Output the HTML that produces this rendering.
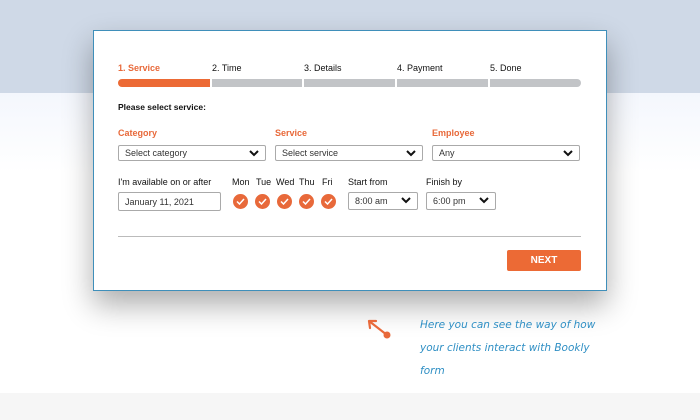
<!DOCTYPE html>
<html><head><meta charset="utf-8"><style>
*{margin:0;padding:0;box-sizing:border-box}
body{width:700px;height:420px;overflow:hidden;position:relative;background:#fff;font-family:"Liberation Sans",sans-serif;font-size:9px;color:#111}
.top{position:absolute;left:0;top:0;width:700px;height:93px;background:#cfd9e7}
.mid{position:absolute;left:0;top:93px;width:700px;height:80px;background:linear-gradient(#f4f7fd,#fff)}
.bot{position:absolute;left:0;top:393px;width:700px;height:27px;background:#f6f6f6}
.card{position:absolute;left:93px;top:30px;width:514px;height:261px;background:#fff;border:1px solid #3f8fba;box-shadow:0 14px 28px rgba(0,0,0,.32)}
.a{position:absolute;white-space:nowrap}
.or{color:#e8693a;font-weight:bold}
.bar{position:absolute;top:79px;height:8px;background:#c2c4c7}
.sel{position:absolute;height:16px;border:1px solid #aaa;border-radius:2px;background:#fff;font-size:9px;color:#333;padding:2px 0 0 6px}
.sel svg{position:absolute;right:6px;top:4px}
.ck{position:absolute;top:194px;width:15px;height:15px;border-radius:50%;background:#e8693a}
.ck svg{position:absolute;left:3px;top:4px}
.b{font-weight:bold}
</style></head><body>
<div class="top"></div><div class="mid"></div><div class="bot"></div>
<div class="card"></div>
<div class="a or" style="left:118px;top:63px">1. Service</div>
<div class="a" style="left:212px;top:63px">2. Time</div>
<div class="a" style="left:304px;top:63px">3. Details</div>
<div class="a" style="left:397px;top:63px">4. Payment</div>
<div class="a" style="left:490px;top:63px">5. Done</div>
<div class="bar" style="left:118px;width:92px;background:#ec6a35;border-radius:4px 0 0 4px"></div>
<div class="bar" style="left:212px;width:90px"></div>
<div class="bar" style="left:304px;width:91px"></div>
<div class="bar" style="left:397px;width:91px"></div>
<div class="bar" style="left:490px;width:91px;border-radius:0 4px 4px 0"></div>
<div class="a b" style="left:118px;top:102px;font-size:8.5px">Please select service:</div>
<div class="a or" style="left:118px;top:128px">Category</div>
<div class="a or" style="left:275px;top:128px">Service</div>
<div class="a or" style="left:432px;top:128px">Employee</div>
<div class="sel" style="left:118px;top:145px;width:148px">Select category<svg width="10" height="7" viewBox="0 0 10 7"><path d="M1 1l4 4 4-4" stroke="#111" stroke-width="2" fill="none"/></svg></div>
<div class="sel" style="left:275px;top:145px;width:148px">Select service<svg width="10" height="7" viewBox="0 0 10 7"><path d="M1 1l4 4 4-4" stroke="#111" stroke-width="2" fill="none"/></svg></div>
<div class="sel" style="left:432px;top:145px;width:148px">Any<svg width="10" height="7" viewBox="0 0 10 7"><path d="M1 1l4 4 4-4" stroke="#111" stroke-width="2" fill="none"/></svg></div>
<div class="a" style="left:118px;top:177px">I'm available on or after</div>
<div class="a" style="left:232px;top:177px">Mon</div>
<div class="a" style="left:256px;top:177px">Tue</div>
<div class="a" style="left:276px;top:177px">Wed</div>
<div class="a" style="left:299px;top:177px">Thu</div>
<div class="a" style="left:322px;top:177px">Fri</div>
<div class="a" style="left:348px;top:177px">Start from</div>
<div class="a" style="left:426px;top:177px">Finish by</div>
<div class="sel" style="left:118px;top:192px;width:103px;height:19px;padding-top:4px">January 11, 2021</div>
<div class="ck" style="left:233px"><svg width="9" height="7" viewBox="0 0 9 7"><path d="M1 3.5l2.5 2.5 4.5-5" stroke="#fff" stroke-width="1.5" fill="none"/></svg></div>
<div class="ck" style="left:255px"><svg width="9" height="7" viewBox="0 0 9 7"><path d="M1 3.5l2.5 2.5 4.5-5" stroke="#fff" stroke-width="1.5" fill="none"/></svg></div>
<div class="ck" style="left:277px"><svg width="9" height="7" viewBox="0 0 9 7"><path d="M1 3.5l2.5 2.5 4.5-5" stroke="#fff" stroke-width="1.5" fill="none"/></svg></div>
<div class="ck" style="left:299px"><svg width="9" height="7" viewBox="0 0 9 7"><path d="M1 3.5l2.5 2.5 4.5-5" stroke="#fff" stroke-width="1.5" fill="none"/></svg></div>
<div class="ck" style="left:321px"><svg width="9" height="7" viewBox="0 0 9 7"><path d="M1 3.5l2.5 2.5 4.5-5" stroke="#fff" stroke-width="1.5" fill="none"/></svg></div>
<div class="sel" style="left:348px;top:192px;width:70px;height:18px;padding-top:3px">8:00 am<svg width="10" height="7" viewBox="0 0 10 7"><path d="M1 1l4 4 4-4" stroke="#111" stroke-width="2" fill="none"/></svg></div>
<div class="sel" style="left:426px;top:192px;width:70px;height:18px;padding-top:3px">6:00 pm<svg width="10" height="7" viewBox="0 0 10 7"><path d="M1 1l4 4 4-4" stroke="#111" stroke-width="2" fill="none"/></svg></div>
<div class="a" style="left:118px;top:236px;width:463px;height:1px;background:#bbb"></div>
<div class="a" style="left:507px;top:250px;width:74px;height:21px;background:#ec6a35;border-radius:2px;color:#fff;font-weight:bold;font-size:10px;text-align:center;line-height:21px">NEXT</div>
<svg class="a" style="left:364px;top:317px" width="30" height="24" viewBox="0 0 30 24"><path d="M23 18L5 4M5 4l1 7M5 4l7 0" stroke="#e8693a" stroke-width="2.2" fill="none" stroke-linecap="round"/><circle cx="23" cy="18" r="3.5" fill="#e8693a"/></svg>
<div class="a" style="left:420px;top:314px;color:#2f8fc4;font-family:'DejaVu Sans',sans-serif;font-style:italic;font-size:10.5px;line-height:23px">Here you can see the way of how<br>your clients interact with Bookly<br>form</div>
</body></html>
